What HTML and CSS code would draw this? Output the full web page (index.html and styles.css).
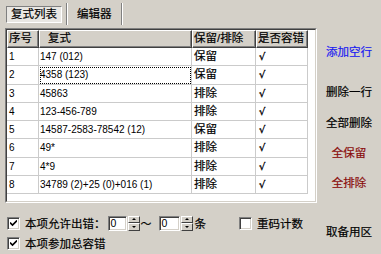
FILE: index.html
```html
<!DOCTYPE html>
<html>
<head>
<meta charset="utf-8">
<link rel="stylesheet" href="styles.css">
</head>
<body>
<div class="app">
  <div class="tabs">
    <div class="tab active">复式列表</div>
    <div class="sep"></div>
    <div class="tab">编辑器</div>
    <div class="sep"></div>
  </div>
  <div class="main">
    <div class="gridbox">
      <div class="gridin">
        <div class="grid">
          <div class="hd">序号</div>
          <div class="hd hd-fs">复式</div>
          <div class="hd">保留/排除</div>
          <div class="hd">是否容错</div>

          <div class="cell num">1</div><div class="cell fs">147 (012)</div><div class="cell">保留</div><div class="cell ok">√</div>
          <div class="cell num">2</div><div class="cell fs focus">4358 (123)</div><div class="cell">保留</div><div class="cell ok">√</div>
          <div class="cell num">3</div><div class="cell fs">45863</div><div class="cell">排除</div><div class="cell ok">√</div>
          <div class="cell num">4</div><div class="cell fs">123-456-789</div><div class="cell">排除</div><div class="cell ok">√</div>
          <div class="cell num">5</div><div class="cell fs">14587-2583-78542 (12)</div><div class="cell">保留</div><div class="cell ok">√</div>
          <div class="cell num">6</div><div class="cell fs">49*</div><div class="cell">排除</div><div class="cell ok">√</div>
          <div class="cell num">7</div><div class="cell fs">4*9</div><div class="cell">排除</div><div class="cell ok">√</div>
          <div class="cell num">8</div><div class="cell fs">34789 (2)+25 (0)+016 (1)</div><div class="cell">排除</div><div class="cell ok">√</div>
        </div>
      </div>
    </div>
    <div class="actions">
      <div class="act blue">添加空行</div>
      <div class="act a2">删除一行</div>
      <div class="act a3">全部删除</div>
      <div class="act red">全保留</div>
      <div class="act red">全排除</div>
    </div>
  </div>
  <div class="bottom">
    <div class="opts">
      <div class="line">
        <span class="cb"><svg width="7" height="7" viewBox="0 0 7 7"><path d="M0 2.5 L2.5 5 L7 0.5" fill="none" stroke="#000" stroke-width="1.6"/></svg></span>
        <span class="lbl">本项允许出错：</span>
        <span class="inp">0</span>
        <span class="spin"><span class="sb"><i class="up"></i></span><span class="sb"><i class="dn"></i></span></span>
        <span class="tilde">～</span>
        <span class="inp inp2">0</span>
        <span class="spin"><span class="sb"><i class="up"></i></span><span class="sb"><i class="dn"></i></span></span>
        <span class="lbl tiao">条</span>
        <span class="cb cb2"></span>
        <span class="lbl">重码计数</span>
      </div>
      <div class="line">
        <span class="cb"><svg width="7" height="7" viewBox="0 0 7 7"><path d="M0 2.5 L2.5 5 L7 0.5" fill="none" stroke="#000" stroke-width="1.6"/></svg></span>
        <span class="lbl">本项参加总容错</span>
      </div>
    </div>
    <div class="spare">取备用区</div>
  </div>
</div>
</body>
</html>
```
FILE: styles.css
```css
html, body {
  margin: 0;
  padding: 0;
}
body {
  background: #d4d0c8;
  color: #000;
  font: 11.5px "Liberation Sans", "Noto Sans CJK SC", sans-serif;
  -webkit-text-stroke: 0.2px currentColor;
}
.app {
  width: 381px;
  height: 254px;
  display: flex;
  flex-direction: column;
  overflow: hidden;
}
.tabs {
  height: 28px;
  box-sizing: border-box;
  display: flex;
  align-items: flex-start;
  padding: 6px 0 0 6px;
}
.tab {
  height: 17px;
  line-height: 17px;
  padding: 0 5px;
  box-sizing: border-box;
}
.tab.active {
  border: 1px solid;
  border-color: #808080 #ffffff #ffffff #808080;
  background: #e9e7e3;
  padding: 0 4px;
  line-height: 15px;
}
.sep {
  width: 0;
  height: 22px;
  margin: -3px 4px 0 4px;
  border-left: 1px solid #808080;
  border-right: 1px solid #ffffff;
}
.main {
  display: flex;
  height: 175px;
}
.gridbox {
  margin-left: 5px;
  width: 312px;
  height: 175px;
  box-sizing: border-box;
  border: 1px solid;
  border-color: #808080 #ffffff #ffffff #808080;
}
.gridin {
  height: 100%;
  box-sizing: border-box;
  border: 1px solid;
  border-color: #404040 #d4d0c8 #d4d0c8 #404040;
  background: #fff;
}
.grid {
  display: grid;
  grid-template-columns: 32px 153px 64px 52px;
  width: 301px;
}
.hd {
  height: 18px;
  box-sizing: border-box;
  background: #d4d0c8;
  border: 1px solid;
  border-color: #ffffff #404040 #404040 #ffffff;
  box-shadow: inset -1px -1px #808080;
  line-height: 15px;
  padding-left: 1px;
  white-space: nowrap;
}
.hd-fs {
  padding-left: 8px;
}
.cell {
  height: 18.3px;
  box-sizing: border-box;
  border-right: 1px solid #cbcbcb;
  border-bottom: 1px solid #cbcbcb;
  line-height: 17px;
  padding-left: 2px;
  white-space: nowrap;
  overflow: hidden;
}
.num, .fs {
  font-size: 10px;
  -webkit-text-stroke: 0;
}
.fs {
  padding-left: 1px;
}
.focus {
  outline: 1px dotted #000;
  outline-offset: -2px;
}
.ok {
  font-family: "DejaVu Sans", sans-serif;
  font-size: 10px;
  padding-left: 3px;
  -webkit-text-stroke: 0.3px #000;
}
.actions {
  flex: 1;
  display: flex;
  flex-direction: column;
  align-items: center;
  padding-top: 9px;
}
.act {
  height: 30px;
  line-height: 30px;
  white-space: nowrap;
}
.a2 {
  margin-top: 10px;
}
.a3 {
  margin-top: 1px;
}
.blue {
  color: #1c1cf0;
}
.red {
  color: #8a0c0c;
}
.bottom {
  flex: 1;
  display: flex;
}
.opts {
  width: 317px;
  display: flex;
  flex-direction: column;
  padding-top: 12px;
  gap: 4px;
}
.line {
  display: flex;
  align-items: center;
  height: 16px;
  white-space: nowrap;
}
.cb {
  width: 13px;
  height: 13px;
  box-sizing: border-box;
  margin-left: 7px;
  margin-right: 5px;
  border: 1px solid;
  border-color: #808080 #ffffff #ffffff #808080;
  box-shadow: inset 1px 1px #404040, inset -1px -1px #d4d0c8;
  background: #fff;
  display: flex;
  align-items: center;
  justify-content: center;
}
.cb svg {
  display: block;
}
.cb2 {
  margin-left: 33px;
}
.inp {
  width: 19px;
  height: 15px;
  box-sizing: border-box;
  margin-left: 2px;
  border: 1px solid;
  border-color: #808080 #ffffff #ffffff #808080;
  box-shadow: inset 1px 1px #404040, inset -1px -1px #d4d0c8;
  background: #fff;
  font-size: 10.5px;
  line-height: 13px;
  padding-left: 2px;
  -webkit-text-stroke: 0;
}
.inp2 {
  width: 21px;
  margin-left: 8px;
}
.spin {
  width: 12px;
  height: 15px;
  margin-left: 1px;
  display: flex;
  flex-direction: column;
}
.sb {
  flex: 1;
  box-sizing: border-box;
  border: 1px solid;
  border-color: #ffffff #404040 #404040 #ffffff;
  background: #d4d0c8;
  display: flex;
  align-items: center;
  justify-content: center;
}
.up, .dn {
  width: 0;
  height: 0;
  border-left: 2px solid transparent;
  border-right: 2px solid transparent;
}
.up {
  border-bottom: 2px solid #000;
}
.dn {
  border-top: 2px solid #000;
}
.tilde {
  margin-left: 1px;
  width: 10px;
  font-size: 11px;
}
.tiao {
  margin-left: 2px;
}
.spare {
  flex: 1;
  text-align: center;
  margin-top: 21px;
  height: 16px;
  line-height: 16px;
  white-space: nowrap;
}
```
